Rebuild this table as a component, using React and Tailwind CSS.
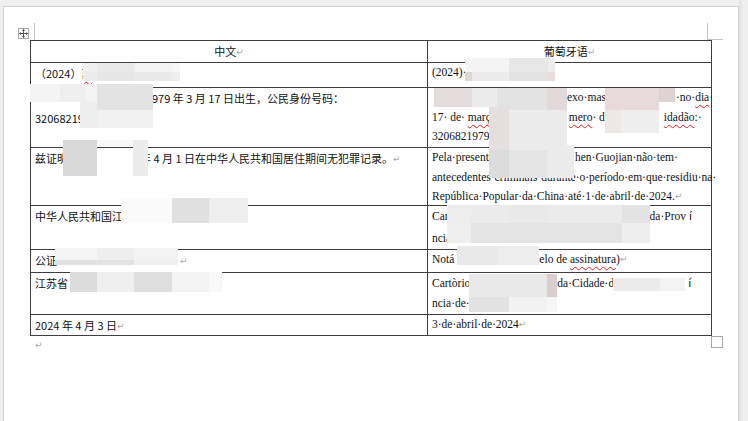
import React from "react";

// pixelated redaction blocks: [left, top, width, height, colour]
const blur = [
  // row 2
  [83, 63, 14, 9, "#f0f0f0"], [97, 63, 37, 9, "#e9e9e9"], [134, 63, 38, 9, "#f3f3f3"], [172, 63, 8, 9, "#f7f7f7"],
  [83, 72, 14, 9, "#ececec"], [97, 72, 37, 9, "#e6e6e6"], [134, 72, 38, 9, "#e9e9e9"], [172, 72, 8, 9, "#ededed"],
  [465, 58, 44, 14, "#f4f4f4"], [509, 58, 39, 14, "#e7e7e7"], [548, 58, 7, 14, "#ececec"],
  [465, 72, 7, 9, "#e0d6d6"], [472, 72, 37, 9, "#ebebeb"], [509, 72, 39, 9, "#e3e3e3"], [548, 72, 7, 9, "#e8dede"],
  // row 3
  [30, 84, 30, 18, "#f4f4f4"], [60, 84, 25, 18, "#efefef"], [85, 84, 12, 18, "#f3f3f3"], [97, 84, 56, 26, "#e3e3e3"],
  [80, 102, 17, 26, "#eeeeee"], [97, 110, 56, 18, "#f1f1f1"],
  [434, 88, 38, 19, "#e4dcdc"], [472, 88, 25, 19, "#ececec"], [497, 88, 50, 22, "#e3e3e3"], [547, 88, 20, 22, "#e2dada"],
  [489, 107, 20, 43, "#e6dfdf"], [509, 110, 38, 40, "#ececec"], [547, 110, 20, 40, "#ebebeb"],
  [605, 88, 54, 22, "#e6dada"], [659, 88, 16, 14, "#ddd3d3"],
  [605, 110, 16, 23, "#efe6e6"], [621, 110, 38, 23, "#eeeeee"],
  // row 4
  [63, 140, 34, 36, "#d9d9d9"], [97, 140, 36, 6, "#f8f8f8"], [133, 140, 15, 36, "#ececec"],
  [489, 150, 20, 28, "#dcdcdc"], [509, 150, 38, 28, "#e5e5e5"], [547, 145, 27, 33, "#ececec"],
  // row 5
  [121, 198, 51, 25, "#fbfbfb"], [172, 198, 37, 25, "#e1e1e1"], [209, 198, 39, 25, "#efefef"],
  [447, 205, 24, 18, "#ededed"], [471, 205, 38, 18, "#ebebeb"], [509, 205, 39, 18, "#e9e9e9"], [548, 205, 74, 18, "#ebebeb"], [622, 205, 28, 18, "#e3e3e3"],
  [447, 223, 24, 20, "#efefef"], [471, 223, 151, 20, "#e4e4e4"], [622, 223, 28, 20, "#eeeeee"],
  // row 6
  [55, 248, 42, 12, "#f5f5f5"], [97, 248, 37, 12, "#eeeeee"], [134, 248, 44, 12, "#f3f3f3"],
  [55, 260, 79, 5, "#e2e2e2"], [134, 260, 44, 5, "#f0f0f0"],
  [457, 246, 40, 19, "#e9e9e9"], [497, 246, 42, 19, "#ededed"],
  // row 7
  [70, 272, 27, 20, "#dcdcdc"], [97, 272, 37, 20, "#efefef"], [134, 272, 38, 20, "#dedede"], [172, 272, 37, 20, "#f3f3f3"], [209, 272, 13, 20, "#f9f9f9"],
  [469, 274, 78, 23, "#e9e9e9"], [547, 274, 10, 23, "#d9cfcf"],
  [469, 297, 40, 15, "#e2e2e2"], [509, 297, 38, 15, "#f2f2f2"], [547, 297, 10, 15, "#f6f6f6"],
  [613, 278, 47, 13, "#ececec"], [660, 278, 25, 13, "#f3f3f3"],
];

const Mark = () => (
  <span className="text-[9px] text-[#a9a9a9] font-['DejaVu_Sans',sans-serif] align-[1px]">↵</span>
);

const Gap = ({ w }) => <span className={`inline-block ${w}`} />;

const Sq = ({ children }) => (
  <span className="underline decoration-wavy decoration-[#e02020] decoration-1 underline-offset-[3px]">
    {children}
  </span>
);

const Row = ({ h, left, right, center }) => (
  <div className={`flex border-b border-[#3f3f3f] ${h}`}>
    <div
      className={`w-[397px] shrink-0 border-r border-[#3f3f3f] px-[4px] text-[11px] leading-[20px] font-['Noto_Sans_CJK_SC','Noto_Sans',sans-serif] whitespace-nowrap ${
        center ? "text-center" : ""
      }`}
    >
      {left}
    </div>
    <div
      className={`w-[284px] shrink-0 border-r border-[#3f3f3f] px-[4px] whitespace-nowrap ${
        center
          ? "text-center text-[11px] leading-[20px] font-['Noto_Sans_CJK_SC','Noto_Sans',sans-serif]"
          : "text-[11.5px] leading-[19.5px] font-['Liberation_Serif',serif]"
      }`}
    >
      {right}
    </div>
  </div>
);

export default function App() {
  return (
    <div className="relative w-[748px] h-[421px] overflow-hidden bg-[#f0f0f0] flex text-[#121212]">
      {/* page */}
      <div className="ml-[3px] mt-[6px] w-[736px] h-[415px] shrink-0 bg-white border-l border-t border-r border-[#d3d3d3] pt-[33px] pl-[26px]">
        <div className="w-[682px] border-l border-t border-[#3f3f3f]">
          <Row
            h="h-[22px]"
            center
            left={<>中文<Mark /></>}
            right={<>葡萄牙语<Mark /></>}
          />
          <Row
            h="h-[25px]"
            left={<>（2024）<Sq>苏</Sq></>}
            right={<>(2024)·</>}
          />
          <Row
            h="h-[60px]"
            left={
              <>
                <div><Gap w="w-[117px]" />979 年 3 月 17 日出生，公民身份号码：</div>
                <div>32068219</div>
              </>
            }
            right={
              <>
                <div><Gap w="w-[135px]" />exo·mas<Gap w="w-[70px]" />·no·<Sq>dia</Sq>·</div>
                <div>17·&nbsp;de·&nbsp;<Sq>març</Sq><Gap w="w-[78px]" /><Sq>mero</Sq>·&nbsp;d<Gap w="w-[59px]" /><Sq>idadão</Sq>:·</div>
                <div>3206821979</div>
              </>
            }
          />
          <Row
            h="h-[58px]"
            left={<>兹证明<Gap w="w-[72px]" />年 4 月 1 日在中华人民共和国居住期间无犯罪记录。<Mark /></>}
            right={
              <>
                <div>Pela·presente<Gap w="w-[81px]" />hen·Guojian·não·tem·</div>
                <div>antecedentes·criminais·durante·o·período·em·que·residiu·na·</div>
                <div>República·Popular·da·China·até·1·de·abril·de·2024.<Mark /></div>
              </>
            }
          />
          <Row
            h="h-[44px]"
            left={<>中华人民共和国江</>}
            right={
              <>
                <div>Car<Gap w="w-[201px]" />da·Prov<span className="ml-[3px] font-['Noto_Sans_CJK_SC',sans-serif] text-[11px]">í</span></div>
                <div className="mt-[2px]">ncia</div>
              </>
            }
          />
          <Row
            h="h-[23px]"
            left={<>公证<Gap w="w-[123px]" /><Mark /></>}
            right={<>Notá<Gap w="w-[85px]" />elo de <Sq>assinatura</Sq>)<Mark /></>}
          />
          <Row
            h="h-[42px]"
            left={<>江苏省</>}
            right={
              <>
                <div>Cartòrio<Gap w="w-[87px]" />da·Cidade·de<Gap w="w-[69px]" /><span className="font-['Noto_Sans_CJK_SC',sans-serif] text-[11px]">í</span></div>
                <div>ncia·de·J</div>
              </>
            }
          />
          <Row
            h="h-[21px]"
            left={<>2024 年 4 月 3 日<Mark /></>}
            right={<>3·de·abril·de·2024<Mark /></>}
          />
        </div>
        <div className="pl-[5px] h-[14px] leading-[14px]">
          <Mark />
        </div>
      </div>
      <div className="flex-1 border-l-[3px] border-[#e6e6e6]" />

      {/* redaction mosaics laid over the text */}
      {blur.map(([x, y, w, h, c], i) => (
        <div
          key={i}
          className="absolute"
          style={{ left: x, top: y, width: w, height: h, background: c }}
        />
      ))}

      {/* table move handle */}
      <div className="absolute left-[18px] top-[28px] w-[11px] h-[11px] border border-[#a9a9a9] bg-white flex items-center justify-center">
        <svg width="9" height="9" viewBox="0 0 9 9" fill="none" stroke="#555" strokeWidth="1">
          <path d="M4.5 0.5v8M0.5 4.5h8" />
          <path d="M3.3 1.7l1.2-1.2 1.2 1.2M3.3 7.3l1.2 1.2 1.2-1.2M1.7 3.3L0.5 4.5l1.2 1.2M7.3 3.3l1.2 1.2-1.2 1.2" />
        </svg>
      </div>

      {/* margin corner marks */}
      <div className="absolute left-[34px] top-[23px] w-px h-[17px] bg-[#c4c4c4]" />
      <div className="absolute left-[707px] top-[23px] w-px h-[17px] bg-[#c4c4c4]" />
      <div className="absolute left-[707px] top-[39px] w-[16px] h-px bg-[#c4c4c4]" />

      {/* table resize handle */}
      <div className="absolute left-[711px] top-[336px] w-[12px] h-[12px] border border-[#a9a9a9] bg-white" />
    </div>
  );
}
